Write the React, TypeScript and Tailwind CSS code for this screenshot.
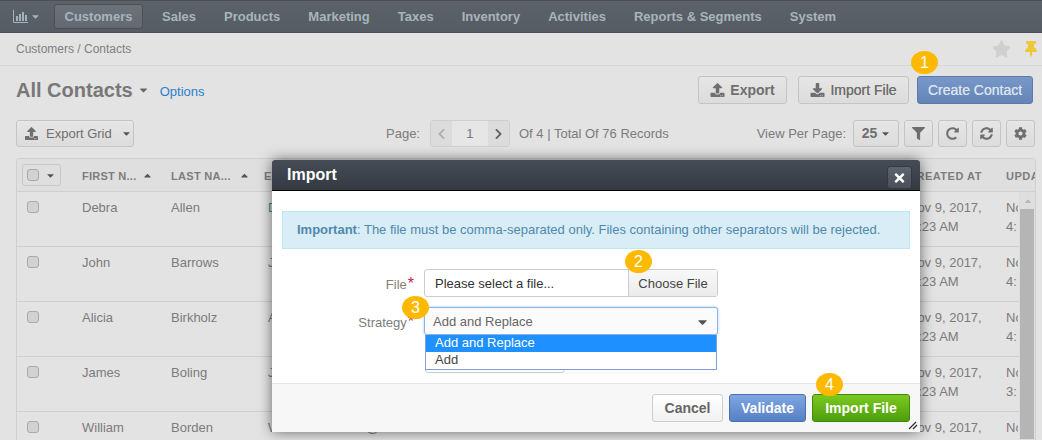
import React from "react";
import { FaCaretDown, FaCaretUp, FaUpload, FaDownload, FaChevronLeft, FaChevronRight, FaFilter, FaRedoAlt, FaSyncAlt, FaCog, FaTimes, FaStar, FaThumbtack } from "react-icons/fa";

const navItems = ["Sales", "Products", "Marketing", "Taxes", "Inventory", "Activities", "Reports & Segments", "System"];

const rows = [
  { first: "Debra", last: "Allen", email: "Debra.Allen@", mail: "text-[#4d8a66]", time: "4:23 AM", up: "4:" },
  { first: "John", last: "Barrows", email: "John.Barrows@", mail: "text-[#7b7b7b]", time: "4:23 AM", up: "4:" },
  { first: "Alicia", last: "Birkholz", email: "Alicia.Birkholz@", mail: "text-[#7b7b7b]", time: "4:23 AM", up: "4:" },
  { first: "James", last: "Boling", email: "James.Boling@", mail: "text-[#7b7b7b]", time: "3:23 AM", up: "3:" },
  { first: "William", last: "Borden", email: "William.Borden.1@", mail: "text-[#7b7b7b]", time: "4:23 AM", up: "4:" },
];

function Check() {
  return <span className="block h-[12px] w-[12px] rounded-[3px] border border-[#a9a9a9] bg-[#d2d2d2]" />;
}

function GrayBtn({ children, className = "" }: { children: React.ReactNode; className?: string }) {
  return (
    <div className={`flex h-[27px] items-center justify-center rounded-[3px] border border-[#c4c4c4] bg-linear-to-b from-[#e6e6e6] to-[#dcdcdc] text-[#6f6f6f] ${className}`}>
      {children}
    </div>
  );
}

function Badge({ n, className }: { n: number; className: string }) {
  return (
    <div className={`absolute z-30 flex h-[23px] w-[27px] items-center justify-center rounded-[50%] bg-[#fdb900] text-[16px] leading-none text-white ${className}`}>
      {n}
    </div>
  );
}

function Req() {
  return <span className="ml-[1px] text-[16px] leading-none text-[#c9174a]">*</span>;
}

export default function App() {
  return (
    <div className="relative h-[440px] w-[1042px] overflow-hidden bg-[#e3e3e3] text-[13px] text-[#7b7b7b]" style={{ fontFamily: '"Liberation Sans", Arial, sans-serif' }}>
      {/* top navigation */}
      <nav className="flex h-[33px] items-center border-t border-b border-t-[#4a4f55] border-b-[#4b5056] bg-linear-to-b from-[#5c6269] to-[#565c63] pl-[13px] text-[13px] font-bold text-[#a8b4bc]">
        <svg width="15" height="13" viewBox="0 0 15 13" className="text-[#a3b3bd]">
          <path d="M0.5 0 V12.5 H15" stroke="currentColor" fill="none" />
          <path d="M3 6h2v5H3zM6 4h2v7H6zM9 2h2v9H9zM12 5h2v6h-2z" fill="currentColor" />
        </svg>
        <FaCaretDown className="ml-[3px] h-[11px] w-[9px] text-[#a3b3bd]" />
        <div className="mr-[-9px] ml-[14px] flex h-[25px] w-[89px] items-center justify-center rounded-[3px] border border-[#4b5056] bg-linear-to-b from-[#6b7279] to-[#626970]">Customers</div>
        <div className="ml-[28px] flex gap-[28px]">
          {navItems.map((n) => (
            <span key={n}>{n}</span>
          ))}
        </div>
      </nav>

      {/* breadcrumb */}
      <div className="flex h-[33px] items-center justify-between border-b border-[#d7d7d7] pr-[5px] pl-[16px] text-[12px] text-[#808080]">
        <span>Customers / Contacts</span>
        <div className="flex items-center gap-[14px]">
          <FaStar className="h-[18px] w-[19px] text-[#d0d0d0]" />
          <FaThumbtack className="h-[18px] w-[12px] text-[#eec837]" />
        </div>
      </div>

      {/* title row */}
      <div className="mt-[10px] flex h-[28px] items-center pr-[9px] pl-[16px]">
        <h1 className="text-[20px] leading-none font-bold text-[#787878]">All Contacts</h1>
        <FaCaretDown className="ml-[6px] h-[12px] w-[9px] text-[#666]" />
        <a className="mt-[3px] ml-[12px] text-[13px] text-[#2c7fc9]">Options</a>
        <div className="ml-auto flex gap-[8px]">
          <GrayBtn className="mr-[3px] h-[28px] w-[89px] gap-[5px] text-[14px] font-bold">
            <FaUpload className="h-[14px] w-[15px]" />
            Export
          </GrayBtn>
          <GrayBtn className="h-[28px] w-[111px] gap-[5px] text-[14px] font-normal [text-shadow:0_0_0.4px_#6f6f6f]">
            <FaDownload className="h-[14px] w-[15px]" />
            Import File
          </GrayBtn>
          <div className="flex h-[28px] w-[116px] items-center justify-center rounded-[3px] border border-[#5c7aa8] bg-linear-to-b from-[#7998c9] to-[#6484b8] text-[14px] text-[#dbe3ee] [text-shadow:0_0_0.4px_#dbe3ee]">Create Contact</div>
        </div>
      </div>

      {/* tools row */}
      <div className="mt-[16px] flex h-[27px] items-center pr-[7px] pl-[16px]">
        <GrayBtn className="w-[118px] justify-start pl-[8px] text-[13px]">
          <FaUpload className="h-[13px] w-[13px]" />
          <span className="ml-[8px]">Export Grid</span>
          <FaCaretDown className="ml-[10px] h-[11px] w-[9px] text-[#555]" />
        </GrayBtn>
        <span className="mt-[1px] ml-[252px]">Page:</span>
        <div className="ml-[10px] flex h-[27px] w-[80px] overflow-hidden rounded-[3px] border border-[#cfcfcf]">
          <div className="flex w-[21px] items-center justify-center bg-[#dcdcdc]"><FaChevronLeft className="h-[12px] w-[9px] text-[#b0b0b0]" /></div>
          <div className="flex w-[36px] items-center justify-center bg-[#e6e6e6] text-[#777]">1</div>
          <div className="flex flex-1 items-center justify-center bg-[#dcdcdc]"><FaChevronRight className="h-[12px] w-[9px] text-[#666]" /></div>
        </div>
        <span className="mt-[1px] ml-[9px]">Of 4 | Total Of 76 Records</span>
        <span className="mt-[1px] mr-[-1px] ml-auto">View Per Page:</span>
        <GrayBtn className="ml-[8px] w-[46px] gap-[4px] text-[14px] font-bold">
          25
          <FaCaretDown className="h-[11px] w-[9px] text-[#555]" />
        </GrayBtn>
        <div className="ml-[5px] flex gap-[5px]">
          <GrayBtn className="w-[29px]"><FaFilter className="h-[13px] w-[13px]" /></GrayBtn>
          <GrayBtn className="w-[29px]"><FaRedoAlt className="h-[13px] w-[13px]" /></GrayBtn>
          <GrayBtn className="w-[29px]"><FaSyncAlt className="h-[13px] w-[13px]" /></GrayBtn>
          <GrayBtn className="w-[29px]"><FaCog className="h-[13px] w-[13px]" /></GrayBtn>
        </div>
      </div>

      {/* grid */}
      <div className="mx-[16px] mt-[11px] w-[1020px] overflow-hidden rounded-t-[3px] border border-[#d0d0d0]">
        <div className="flex h-[33px] items-center border-b border-[#cfcfcf] bg-[#dfdfdf] text-[11px] font-bold tracking-[0.5px] text-[#7d7d7d] uppercase">
          <div className="ml-[5px] flex h-[22px] w-[39px] shrink-0 items-center rounded-[3px] border border-[#c8c8c8] pl-[4px]">
            <Check />
            <FaCaretDown className="ml-[7px] h-[11px] w-[9px] text-[#555]" />
          </div>
          <span className="mt-[2px] ml-[21px] w-[61px] shrink-0 tracking-[0.25px] whitespace-nowrap">First N...</span>
          <FaCaretUp className="h-[11px] w-[9px] shrink-0 text-[#555]" />
          <span className="mt-[2px] ml-[19px] w-[64px] shrink-0 tracking-[0.3px] whitespace-nowrap">Last Na...</span>
          <FaCaretUp className="ml-[5px] h-[11px] w-[9px] shrink-0 text-[#555]" />
          <span className="mt-[2px] ml-[15px] w-[644px] shrink-0">Email</span>
          <span className="mt-[2px] w-[98px] shrink-0 whitespace-nowrap">Created At</span>
          <span className="mt-[2px] w-[30px] shrink-0 whitespace-nowrap">Upda</span>
        </div>
        <div className="relative">
          {rows.map((r) => (
            <div key={r.first} className="flex h-[55px] w-[1002px] border-b border-[#cfcfcf] pt-[6px] leading-[19px]">
              <div className="ml-[10px] pt-[3px]"><Check /></div>
              <span className="ml-[43px] w-[89px]">{r.first}</span>
              <span className="w-[97px]">{r.last}</span>
              <span className={`w-[640px] whitespace-nowrap ${r.mail}`}>{r.email}</span>
              <span className="w-[98px]">Nov 9, 2017,<br /><span className="ml-[3px]">{r.time}</span></span>
              <span className="w-[12px] overflow-hidden whitespace-nowrap">Nov<br />{r.up}</span>
            </div>
          ))}
          <div className="absolute top-0 right-0 bottom-0 w-[16px] bg-[#dedede] pt-[4px] pl-[1px]">
            <FaCaretUp className="mx-auto h-[10px] w-[10px] text-[#b5b5b5]" />
            <div className="mt-[3px] h-[230px] w-[14px] bg-[#b5b5b5]" />
          </div>
        </div>
      </div>

      <Badge n={1} className="top-[51px] left-[911px]" />

      {/* modal */}
      <div className="absolute top-[160px] left-[272px] z-10 h-[272px] w-[648px] rounded-t-[3px] bg-white shadow-[0_0_14px_rgba(0,0,0,0.55)]">
        <div className="flex h-[31px] items-center justify-between rounded-t-[3px] border-b border-black bg-linear-to-b from-[#454c56] to-[#343a42] pr-[8px] pl-[15px]">
          <span className="text-[16px] font-bold text-white">Import</span>
          <div className="mt-[5px] flex h-[23px] w-[25px] items-center justify-center rounded-[3px] border border-[#343a42] bg-linear-to-b from-[#5d646d] to-[#4a5059]">
            <FaTimes className="h-[14px] w-[13px] text-white" />
          </div>
        </div>

        <div className="mx-[10px] mt-[20px] flex h-[38px] items-center border border-[#bce8f1] bg-[#d9edf7] pl-[14px] text-[13px] text-[#4f89ab]">
          <span><b>Important</b>: The file must be comma-separated only. Files containing other separators will be rejected.</span>
        </div>

        <div className="mt-[20px] flex h-[28px] items-center">
          <label className="mt-[3px] w-[142px] text-right text-[13px] text-[#877e75]">File<Req /></label>
          <div className="ml-[10px] flex h-[28px] w-[294px] rounded-[3px] border border-[#cccccc]">
            <span className="flex w-[203px] items-center pt-[1px] pl-[10px] text-[13px] text-[#333]">Please select a file...</span>
            <span className="flex flex-1 items-center justify-center border-l border-[#cccccc] bg-linear-to-b from-[#f8f8f8] to-[#ececec] pt-[1px] text-[13px] text-[#444]">Choose File</span>
          </div>
        </div>

        <div className="relative mt-[10px] flex h-[28px] items-center">
          <label className="mt-[4px] w-[142px] text-right text-[13px] text-[#7d7d7d]">Strategy<Req /></label>
          <div className="relative ml-[10px] flex h-[28px] w-[294px] items-center justify-between rounded-[3px] border border-[#8ab4e8] bg-[#fbfbfb] pt-[1px] pr-[8px] pl-[8px] text-[13px] text-[#666] shadow-[0_0_3px_rgba(110,170,240,0.6)]">
            <span>Add and Replace</span>
            <FaCaretDown className="h-[14px] w-[13px] text-[#555]" />
            <div className="absolute top-[27px] left-0 z-20 w-[292px] border border-t-0 border-[#7f9fd6] bg-white text-[13px] leading-[16px] text-[#444]">
              <div className="bg-[#1e90ff] pb-[1px] pl-[9px] text-white">Add and Replace</div>
              <div className="pb-[1px] pl-[9px]">Add</div>
            </div>
            <div className="absolute top-[52px] left-0 h-[13px] w-[140px] rounded-b-[3px] border border-[#ccc]" />
          </div>
        </div>

        <div className="absolute right-0 bottom-0 left-0 flex h-[49px] items-center justify-end gap-[6px] border-t border-[#e5e5e5] bg-[#f7f7f7] pr-[10px] text-[14px] font-bold">
          <div className="flex h-[28px] w-[71px] items-center justify-center rounded-[3px] border border-[#cccccc] bg-linear-to-b from-[#ffffff] to-[#f1f1f1] text-[#666]">Cancel</div>
          <div className="flex h-[28px] w-[77px] items-center justify-center rounded-[3px] border border-[#4a70b0] bg-linear-to-b from-[#80a6e2] to-[#5680c6] text-white">Validate</div>
          <div className="flex h-[28px] w-[98px] items-center justify-center rounded-[3px] border border-[#3f8a0d] bg-linear-to-b from-[#7cc91f] to-[#4c9f0a] text-white">Import File</div>
        </div>

        <svg className="absolute right-[2px] bottom-[2px]" width="10" height="9" viewBox="0 0 10 9">
          <path d="M1 8 L8 1 M5 8 L9 4" stroke="#333" strokeWidth="1.3" fill="none" />
        </svg>
      </div>

      <Badge n={2} className="top-[250px] left-[625px]" />
      <Badge n={3} className="top-[296px] left-[402px]" />
      <Badge n={4} className="top-[373px] left-[816px]" />
    </div>
  );
}
